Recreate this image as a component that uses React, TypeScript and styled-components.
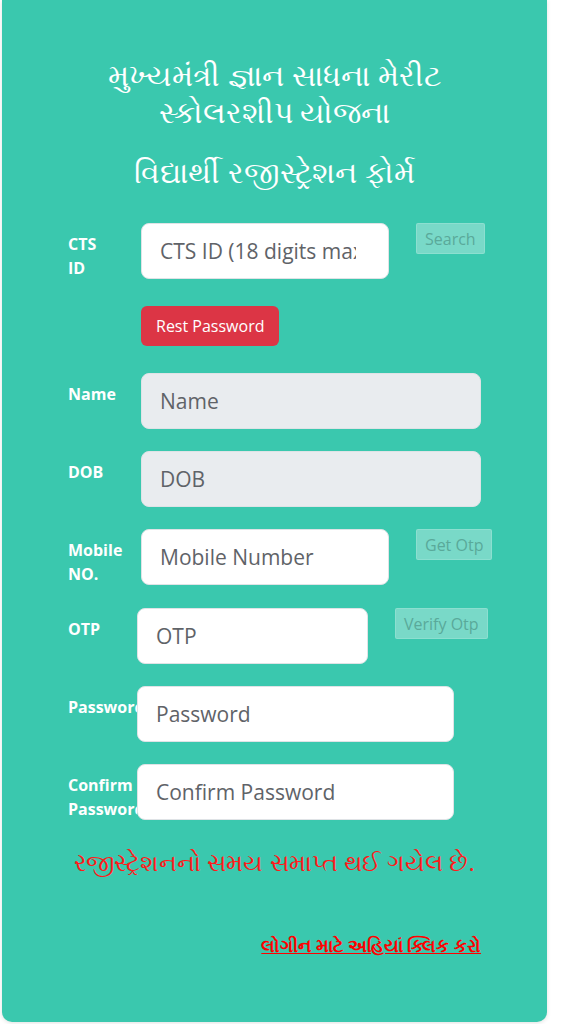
import React from "react";
import styled, { createGlobalStyle } from "styled-components";

const GlobalStyle = createGlobalStyle`
  body {
    margin: 0;
    background: #ffffff;
    font-family: "Open Sans", "Noto Sans", sans-serif;
  }
`;

const Page = styled.div`
  width: 585px;
  height: 1024px;
  overflow: hidden;
  padding: 0 0 0 2px;
  box-sizing: border-box;
`;

const Card = styled.div`
  width: 545px;
  height: 1022px;
  box-sizing: border-box;
  background: #3ac8ae;
  border-radius: 0 0 10px 10px;
  box-shadow: 0 1px 4px rgba(0, 0, 0, 0.12);
  padding: 56px 66px 0 66px;
`;

const Title = styled.h2`
  margin: 0;
  text-align: center;
  color: #ffffff;
  font-weight: 400;
  font-size: 30px;
  line-height: 37px;
  padding: 0 10px;
`;

const SubTitle = styled.h2`
  margin: 20px 0 0 0;
  text-align: center;
  color: #ffffff;
  font-weight: 400;
  font-size: 30px;
  line-height: 44px;
`;

const Form = styled.div`
  margin-top: 29px;
  display: flex;
  flex-direction: column;
  gap: 22px;
`;

const Row = styled.div`
  display: flex;
  align-items: flex-start;
`;

const Label = styled.label<{ $w: number }>`
  width: ${(p) => p.$w}px;
  flex: none;
  padding-top: 9px;
  color: #ffffff;
  font-weight: 700;
  font-size: 16px;
  line-height: 24px;
  overflow: hidden;
`;

const Input = styled.input<{ $w: number; $pr?: number }>`
  width: ${(p) => p.$w}px;
  flex: none;
  height: 56px;
  box-sizing: border-box;
  border: 1px solid #dfe3e6;
  border-radius: 8px;
  padding: 0 ${(p) => p.$pr ?? 18}px 0 18px;
  font-family: inherit;
  font-size: 21px;
  color: #495057;
  background: #ffffff;
  &::placeholder {
    color: #5f6368;
  }
  &:disabled {
    background: #e9ecef;
  }
`;

const GhostButton = styled.button<{ $ml: number }>`
  flex: none;
  white-space: nowrap;
  margin-left: ${(p) => p.$ml}px;
  height: 31px;
  padding: 0 8px;
  border: 1px solid rgba(255, 255, 255, 0.15);
  border-radius: 2px;
  background: rgba(255, 255, 255, 0.32);
  color: #5aa99a;
  font-family: inherit;
  font-size: 16px;
`;

const ResetRow = styled.div`
  padding: 26px 0 5px 73px;
`;

const DangerButton = styled.button`
  height: 40px;
  padding: 0 15px;
  border: none;
  border-radius: 6px;
  background: #dc3545;
  color: #ffffff;
  font-family: inherit;
  font-size: 16px;
`;

const Expired = styled.p`
  margin: 23px 0 0 0;
  text-align: center;
  white-space: nowrap;
  color: #ff1a1a;
  font-size: 24px;
  line-height: 36px;
`;

const LoginLink = styled.a`
  display: block;
  margin: 53px 0 0 0;
  text-align: right;
  color: #ff0000;
  font-weight: 700;
  font-size: 18px;
  text-decoration: underline;
`;

export default function App() {
  return (
    <>
      <GlobalStyle />
      <Page>
        <Card>
          <Title>મુખ્યમંત્રી જ્ઞાન સાધના મેરીટ સ્કોલરશીપ યોજના</Title>
          <SubTitle>વિદ્યાર્થી રજીસ્ટ્રેશન ફોર્મ</SubTitle>
          <Form>
            <div>
              <Row>
                <Label $w={73}>
                  CTS
                  <br />
                  ID
                </Label>
                <Input $w={248} $pr={32} placeholder="CTS ID (18 digits max)" />
                <GhostButton $ml={27}>Search</GhostButton>
              </Row>
              <ResetRow>
                <DangerButton>Rest Password</DangerButton>
              </ResetRow>
            </div>
            <Row>
              <Label $w={73}>Name</Label>
              <Input $w={340} placeholder="Name" disabled />
            </Row>
            <Row>
              <Label $w={73}>DOB</Label>
              <Input $w={340} placeholder="DOB" disabled />
            </Row>
            <Row>
              <Label $w={73}>
                Mobile
                <br />
                NO.
              </Label>
              <Input $w={248} placeholder="Mobile Number" />
              <GhostButton $ml={27}>Get Otp</GhostButton>
            </Row>
            <Row>
              <Label $w={69}>OTP</Label>
              <Input $w={231} placeholder="OTP" />
              <GhostButton $ml={27}>Verify Otp</GhostButton>
            </Row>
            <Row>
              <Label $w={69}>Password</Label>
              <Input $w={317} placeholder="Password" />
            </Row>
            <Row>
              <Label $w={69}>Confirm Password</Label>
              <Input $w={317} placeholder="Confirm Password" />
            </Row>
          </Form>
          <Expired>રજીસ્ટ્રેશનનો સમય સમાપ્ત થઈ ગયેલ છે.</Expired>
          <LoginLink href="#">લોગીન માટે અહિયાં ક્લિક કરો</LoginLink>
        </Card>
      </Page>
    </>
  );
}
